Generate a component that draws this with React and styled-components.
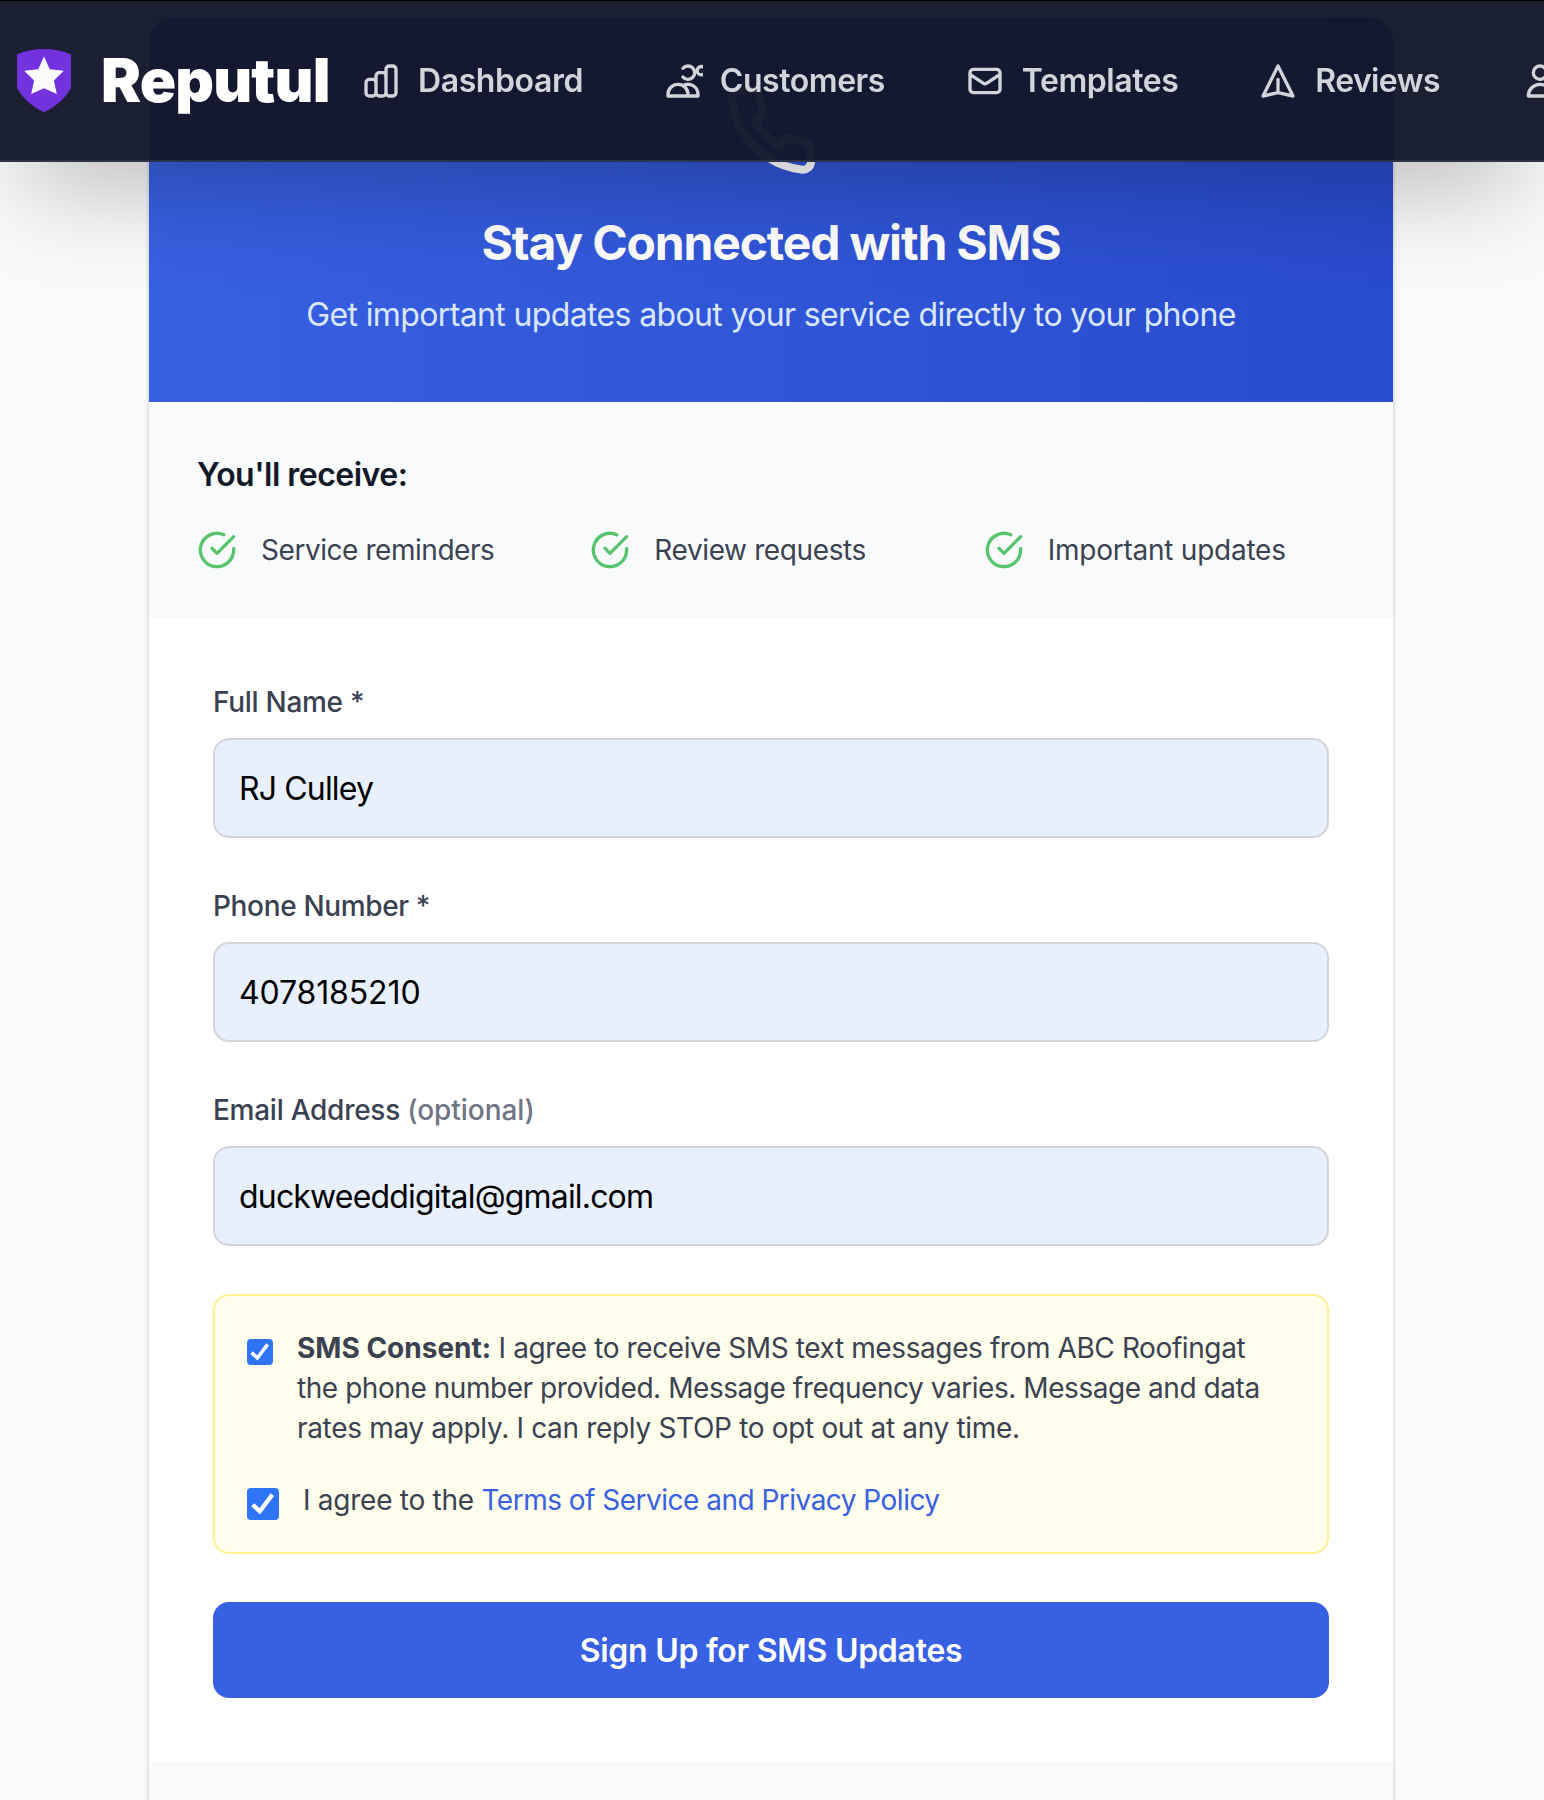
import React, { useState } from 'react';
import styled, { createGlobalStyle } from 'styled-components';

const GlobalStyle = createGlobalStyle`
  *, *::before, *::after { box-sizing: border-box; }
  html, body { margin: 0; padding: 0; overflow: hidden; }
  body {
    background: #f9fafc;
    color: #111827;
    font-family: Inter, "Liberation Sans", sans-serif;
  }
`;

const Page = styled.div`
  height: 1800px;
  padding-top: 18px;
  overflow: hidden;
`;

const NavBar = styled.header`
  position: fixed;
  inset: 0 0 auto 0;
  z-index: 10;
  height: 162px;
  background: rgba(19, 23, 42, 0.965);
  border-top: 1px solid #000;
  border-bottom: 2px solid #2c3347;
  box-shadow: 0 50px 100px -24px rgba(0, 0, 0, 0.25);
`;

const NavInner = styled.div`
  display: flex;
  align-items: center;
  height: 100%;
  padding-left: 17px;
  overflow: hidden;
`;

const Brand = styled.div`
  display: flex;
  flex: none;
  align-items: center;
  gap: 30px;
  width: 344px;
`;

const BrandName = styled.span`
  color: #fff;
  font-size: 60px;
  font-weight: 900;
  line-height: 72px;
  letter-spacing: -0.8px;
  padding-bottom: 1px;
`;

const NavList = styled.nav`
  display: flex;
  flex: none;
  gap: 79.8px;
`;

const NavItem = styled.a`
  display: flex;
  flex: none;
  align-items: center;
  gap: 17px;
  color: #d1d5db;
  font-size: 32px;
  font-weight: 600;
  line-height: 48px;
  white-space: nowrap;
`;

const Tracked = styled.span`
  letter-spacing: ${(p) => p.$track}px;
`;

const LineIcon = styled.svg`
  display: block;
  flex: none;
  width: ${(p) => p.$size || 40}px;
  height: ${(p) => p.$size || 40}px;
  fill: none;
  stroke: currentColor;
  stroke-width: 2;
  stroke-linecap: round;
  stroke-linejoin: round;
  overflow: hidden;
`;

const Card = styled.main`
  width: 1248px;
  height: 1900px;
  margin-left: 147px;
  background: #fff;
  border: 2px solid #e5e7eb;
  border-top-width: 0;
  border-radius: 24px;
  box-shadow: 0 2px 4px rgba(0, 0, 0, 0.05);
  overflow: hidden;
`;

const Hero = styled.section`
  display: flex;
  flex-direction: column;
  align-items: center;
  height: 384px;
  padding-top: 64px;
  background: linear-gradient(to right, #3860e2, #294bcd);
  color: #fff;
`;

const HeroTitle = styled.h1`
  margin: 33px 0 0;
  font-size: 48px;
  font-weight: 700;
  line-height: 64px;
  letter-spacing: -1.17px;
`;

const HeroText = styled.p`
  margin: 16px 0 0;
  color: #dbe7fe;
  font-size: 32px;
  line-height: 48px;
  letter-spacing: -0.637px;
`;

const Benefits = styled.section`
  padding: 49px 48px 48px;
  background: #f9fafc;
`;

const BenefitsTitle = styled.h2`
  margin: 0 0 31px;
  color: #111827;
  font-size: 32px;
  font-weight: 600;
  line-height: 48px;
  letter-spacing: -0.52px;
`;

const BenefitGrid = styled.div`
  display: grid;
  grid-template-columns: repeat(3, 1fr);
  gap: 32px;
`;

const Benefit = styled.div`
  display: flex;
  align-items: center;
  gap: 24px;
  color: #3a4252;
  font-size: 28px;
  line-height: 40px;
  white-space: nowrap;

  svg { color: #58c46b; }
`;

const Form = styled.form`
  display: flex;
  flex-direction: column;
  gap: 48px;
  padding: 64px;
`;

const Field = styled.label`
  display: flex;
  flex-direction: column;
  gap: 16px;
  color: #3a4252;
  font-size: 28px;
  font-weight: 500;
  line-height: 40px;
`;

const Optional = styled.span`
  color: #6e7583;
  letter-spacing: -0.06px;
`;

const Input = styled.input`
  width: 100%;
  height: 100px;
  padding: 0 24px;
  background: #e8effd;
  border: 2px solid #d1d5db;
  border-radius: 16px;
  outline: none;
  color: #000;
  font-family: inherit;
  font-size: 32px;
  font-weight: 400;
  letter-spacing: ${(p) => p.$track}px;
`;

const Consent = styled.div`
  display: flex;
  flex-direction: column;
  gap: 32px;
  padding: 32px;
  background: #fffdeb;
  border: 2px solid #fdf08f;
  border-radius: 16px;
`;

const ConsentRow = styled.label`
  display: flex;
  align-items: flex-start;
  gap: 24px;
  color: #3a4252;
  font-size: 28px;
  line-height: 40px;
  white-space: nowrap;
`;

const Box = styled.span`
  display: block;
  flex: none;
  width: ${(p) => p.$size}px;
  height: ${(p) => p.$size}px;
  margin-top: ${(p) => p.$drop}px;
  background: #2f73f7;
  border-radius: 4px;

  svg { display: block; width: 100%; height: 100%; }
`;

const Line = styled.span`
  display: block;
  letter-spacing: ${(p) => p.$track}px;
`;

const Strong = styled.strong`
  font-weight: 700;
  letter-spacing: 0;
`;

const Link = styled.a`
  color: #3860e2;
  letter-spacing: -0.51px;
`;

const Submit = styled.button`
  height: 96px;
  padding: 0;
  background: #3860e2;
  border: 0;
  border-radius: 16px;
  color: #fff;
  font-family: inherit;
  font-size: 32px;
  font-weight: 600;
  letter-spacing: -0.27px;
`;

const CardFooter = styled.footer`
  height: 200px;
  background: #f9fafc;
`;

function Icon({ paths, size }) {
  return (
    <LineIcon viewBox="0 0 24 24" $size={size}>
      {paths.map((d) => <path key={d} d={d} />)}
    </LineIcon>
  );
}

function Shield() {
  return (
    <svg width="54" height="64" viewBox="0 0 54 64">
      <path d="M0 5.5Q12 0 27 0Q42 0 54 5.5V39Q46 54 27 63.5Q8 54 0 39Z" fill="#7431de" />
      <path d="M27 7.5L32.8 20.3L46.8 21.8L36.9 31.5L39.8 45L27 39.2L14.2 45L17.1 31.5L7.2 21.8L21.2 20.3Z" fill="#fafafa" />
    </svg>
  );
}

function Checkbox({ size, drop }) {
  return (
    <Box $size={size} $drop={drop}>
      <svg viewBox="0 0 26 26">
        <path d="M4.6 13.6L10.4 19L20.6 5.4" fill="none" stroke="#fff" strokeWidth="3.5" strokeLinecap="butt" strokeLinejoin="miter" />
      </svg>
    </Box>
  );
}

const ICONS = {
  chart: ['M9 19v-6a2 2 0 00-2-2H5a2 2 0 00-2 2v6a2 2 0 002 2h2a2 2 0 002-2zm0 0V9a2 2 0 012-2h2a2 2 0 012 2v10m-6 0a2 2 0 002 2h2a2 2 0 002-2m0 0V5a2 2 0 012-2h2a2 2 0 012 2v14a2 2 0 01-2 2h-2a2 2 0 01-2-2z'],
  users: ['M12 4.354a4 4 0 110 5.292M15 21H3v-1a6 6 0 0112 0v1zm0 0h6v-1a6 6 0 00-9-5.197m13.5-9a2.5 2.5 0 11-5 0 2.5 2.5 0 015 0z'],
  mail: ['M3 8l7.89 5.26a2 2 0 002.22 0L21 8M5 19h14a2 2 0 002-2V7a2 2 0 00-2-2H5a2 2 0 00-2 2v10a2 2 0 002 2z'],
  plane: ['M12 19l9 2-9-18-9 18 9-2zm0 0v-8'],
  user: ['M16 7a4 4 0 11-8 0 4 4 0 018 0zM12 14a7 7 0 00-7 7h14a7 7 0 00-7-7z'],
  check: ['M22 11.08V12a10 10 0 1 1-5.93-9.14', 'M22 4L12 14.01l-3-3'],
  phone: ['M22 16.92v3a2 2 0 0 1-2.18 2 19.79 19.79 0 0 1-8.63-3.07 19.5 19.5 0 0 1-6-6 19.79 19.79 0 0 1-3.07-8.67A2 2 0 0 1 4.11 2h3a2 2 0 0 1 2 1.72 12.84 12.84 0 0 0 .7 2.81 2 2 0 0 1-.45 2.11L8.09 9.91a16 16 0 0 0 6 6l1.27-1.27a2 2 0 0 1 2.11-.45 12.84 12.84 0 0 0 2.81.7A2 2 0 0 1 22 16.92z'],
};

const NAV = [
  { label: 'Dashboard', icon: 'chart', track: -0.412 },
  { label: 'Customers', icon: 'users', track: -0.46 },
  { label: 'Templates', icon: 'mail', track: -0.43 },
  { label: 'Reviews', icon: 'plane', track: -0.592 },
  { label: '', icon: 'user', track: 0 },
];

const BENEFITS = [
  { label: 'Service reminders', track: -0.45 },
  { label: 'Review requests', track: -0.386 },
  { label: 'Important updates', track: -0.24 },
];

export default function App() {
  const [values, setValues] = useState({
    name: 'RJ Culley',
    phone: '4078185210',
    email: 'duckweeddigital@gmail.com',
  });
  const update = (key) => (e) => setValues({ ...values, [key]: e.target.value });

  return (
    <>
      <GlobalStyle />
      <NavBar>
        <NavInner>
          <Brand>
            <Shield />
            <BrandName>Reputul</BrandName>
          </Brand>
          <NavList>
            {NAV.map((item) => (
              <NavItem key={item.icon}>
                <Icon paths={ICONS[item.icon]} />
                {item.label && <Tracked $track={item.track}>{item.label}</Tracked>}
              </NavItem>
            ))}
          </NavList>
        </NavInner>
      </NavBar>
      <Page>
        <Card>
          <Hero>
            <Icon paths={ICONS.phone} size={96} />
            <HeroTitle>Stay Connected with SMS</HeroTitle>
            <HeroText>Get important updates about your service directly to your phone</HeroText>
          </Hero>
          <Benefits>
            <BenefitsTitle>You'll receive:</BenefitsTitle>
            <BenefitGrid>
              {BENEFITS.map((b) => (
                <Benefit key={b.label}>
                  <Icon paths={ICONS.check} />
                  <Tracked $track={b.track}>{b.label}</Tracked>
                </Benefit>
              ))}
            </BenefitGrid>
          </Benefits>
          <Form onSubmit={(e) => e.preventDefault()}>
            <Field>
              <Tracked $track={-0.29}>Full Name *</Tracked>
              <Input $track={-0.84} value={values.name} onChange={update('name')} />
            </Field>
            <Field>
              <Tracked $track={-0.35}>Phone Number *</Tracked>
              <Input $track={-0.12} value={values.phone} onChange={update('phone')} />
            </Field>
            <Field>
              <Tracked $track={-0.26}>Email Address <Optional>(optional)</Optional></Tracked>
              <Input $track={-0.82} value={values.email} onChange={update('email')} />
            </Field>
            <Consent>
              <ConsentRow>
                <Checkbox size={26} drop={11} />
                <span>
                  <Line $track={-0.401}><Strong>SMS Consent:</Strong> I agree to receive SMS text messages from ABC Roofingat</Line>
                  <Line $track={-0.446}>the phone number provided. Message frequency varies. Message and data</Line>
                  <Line $track={-0.325}>rates may apply. I can reply STOP to opt out at any time.</Line>
                </span>
              </ConsentRow>
              <ConsentRow>
                <Checkbox size={32} drop={8} />
                <Line $track={-0.26}>I agree to the <Link>Terms of Service and Privacy Policy</Link></Line>
              </ConsentRow>
            </Consent>
            <Submit type="submit">Sign Up for SMS Updates</Submit>
          </Form>
          <CardFooter />
        </Card>
      </Page>
    </>
  );
}
